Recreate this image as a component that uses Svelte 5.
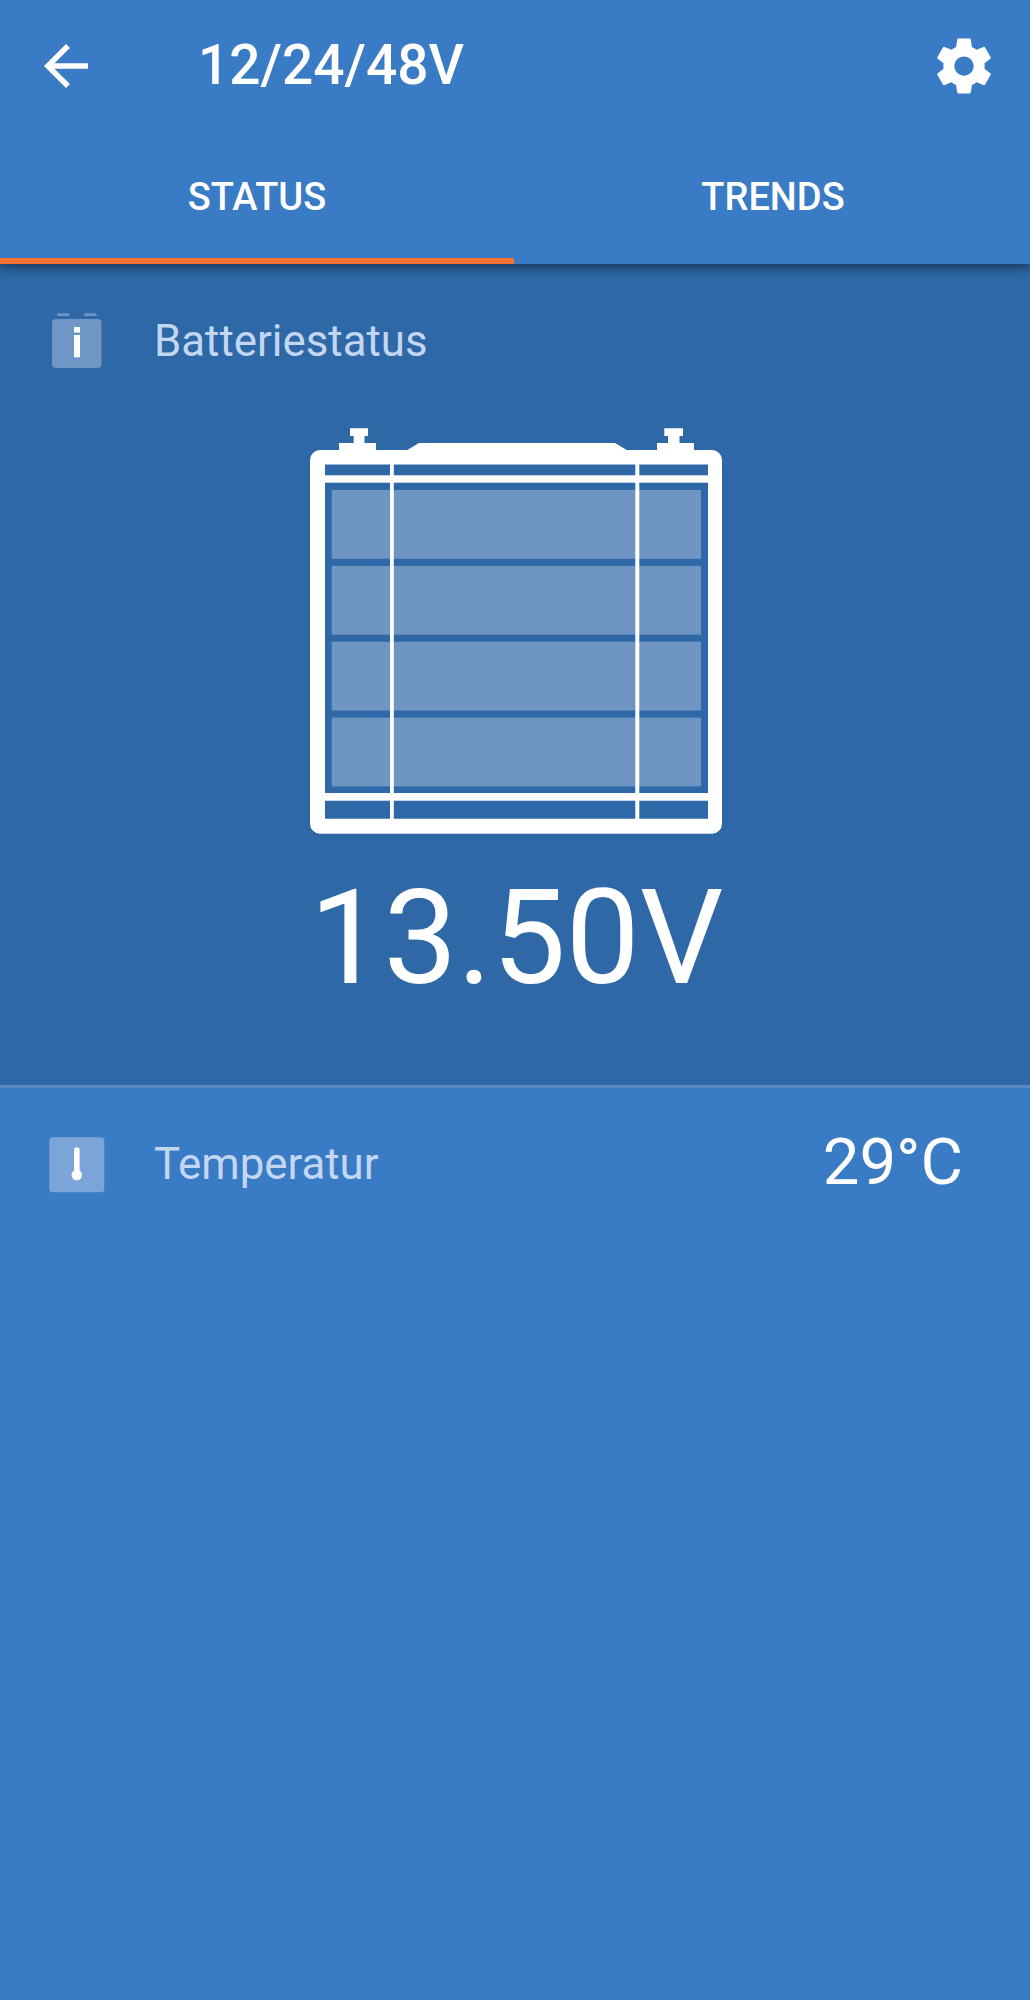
<script lang="ts">
	const tabs = ['STATUS', 'TRENDS'];
	let active = $state(0);

	const title = '12/24/48V';
	const voltage = '13.50V';
	const temperature = '29°C';

	// top edge of each charge bar inside the battery
	const cells = [62, 137.9, 213.7, 289.6];
</script>

<div class="app">
	<header class="appBar">
		<div class="toolbar">
			<button class="iconButton" aria-label="Zurück">
				<svg width="66" height="66" viewBox="0 0 24 24" fill="currentColor">
					<path d="M20 11H7.83l5.59-5.59L12 4l-8 8 8 8 1.41-1.41L7.83 13H20v-2z" />
				</svg>
			</button>
			<h1 class="title">{title}</h1>
			<button class="iconButton" aria-label="Einstellungen">
				<svg width="66" height="66" viewBox="0 0 24 24" fill="currentColor">
					<path
						d="M19.43 12.98c.04-.32.07-.64.07-.98s-.03-.66-.07-.98l2.11-1.65c.19-.15.24-.42.12-.64l-2-3.46c-.12-.22-.39-.3-.61-.22l-2.49 1c-.52-.4-1.08-.73-1.69-.98l-.38-2.65C14.46 2.18 14.25 2 14 2h-4c-.25 0-.46.18-.49.42l-.38 2.65c-.61.25-1.17.59-1.69.98l-2.49-1c-.23-.09-.49 0-.61.22l-2 3.46c-.13.22-.07.49.12.64l2.11 1.65c-.04.32-.07.65-.07.98s.03.66.07.98l-2.11 1.65c-.19.15-.24.42-.12.64l2 3.46c.12.22.39.3.61.22l2.49-1c.52.4 1.08.73 1.69.98l.38 2.65c.03.24.24.42.49.42h4c.25 0 .46-.18.49-.42l.38-2.65c.61-.25 1.17-.59 1.69-.98l2.49 1c.23.09.49 0 .61-.22l2-3.46c.12-.22.07-.49-.12-.64l-2.11-1.65zM12 15.5c-1.93 0-3.5-1.57-3.5-3.5s1.57-3.5 3.5-3.5 3.5 1.57 3.5 3.5-1.57 3.5-3.5 3.5z"
					/>
				</svg>
			</button>
		</div>
		<div class="tabs" role="tablist">
			{#each tabs as tab, i}
				<button
					class="tab"
					class:active={active === i}
					role="tab"
					aria-selected={active === i}
					onclick={() => (active = i)}
				>
					{tab}
				</button>
			{/each}
		</div>
	</header>

	<section class="battery">
		<div class="row">
			<svg class="rowIcon" width="56" height="56" viewBox="0 0 56 56">
				<g fill="#7096c5">
					<rect x="8" y="0.3" width="12" height="2.7" />
					<rect x="35.5" y="0.3" width="12" height="2.7" />
					<rect x="3" y="6" width="49.5" height="49" rx="4" />
				</g>
				<g fill="#fff">
					<rect x="25" y="14" width="6" height="5.5" />
					<rect x="25" y="22" width="6" height="22.3" />
				</g>
			</svg>
			<span class="label">Batteriestatus</span>
		</div>

		<svg class="batteryFigure" width="412" height="406" viewBox="0 0 412 406">
			<g fill="#6f95c2">
				{#each cells as y}
					<rect x="21.7" {y} width="369.3" height="68.8" />
				{/each}
			</g>
			<g fill="#fff">
				<path
					fill-rule="evenodd"
					d="M10 22H402a10 10 0 0 1 10 10V395.7a10 10 0 0 1-10 10H10a10 10 0 0 1-10-10V32a10 10 0 0 1 10-10zM15 36.5V390.7H398V36.5z"
				/>
				<path d="M40 0.3H58V8H54.5V15H66V23H29V15H43.7V8H40z" />
				<path d="M354.3 0.3H373V8H369.5V15H384V23H347V15H358V8H354.3z" />
				<path d="M96.5 22.5L109 15H305L317.5 22.5z" />
				<rect x="14" y="47.3" width="385" height="7.4" />
				<rect x="14" y="365" width="385" height="7.7" />
				<rect x="80" y="36" width="3.8" height="355" />
				<rect x="325.3" y="36" width="4" height="355" />
			</g>
		</svg>

		<div class="voltage">{voltage}</div>
	</section>

	<section class="row temperature">
		<svg class="rowIcon" width="56" height="56" viewBox="0 0 56 56">
			<rect x="0.3" y="0.3" width="55" height="55" rx="3.5" fill="#7ba4d8" />
			<path d="M27.8 13V38" stroke="#fff" stroke-width="5.6" stroke-linecap="round" />
			<circle cx="27.8" cy="38" r="5.3" fill="#fff" />
		</svg>
		<span class="label">Temperatur</span>
		<span class="value">{temperature}</span>
	</section>
</div>

<style>
	:global(body) {
		margin: 0;
		background: #397bc5;
	}

	.app {
		display: flex;
		flex-direction: column;
		min-height: 2000px;
		background: #397bc5;
		color: #fff;
		font-family: Roboto, 'Liberation Sans', sans-serif;
	}

	button {
		margin: 0;
		border: 0;
		padding: 0;
		background: none;
		color: inherit;
		font: inherit;
		cursor: pointer;
	}

	.appBar {
		position: relative;
		z-index: 1;
		height: 264px;
		background: #397bc5;
		box-shadow:
			0 4px 12px rgb(0 0 0 / 0.3),
			0 0 9px 2px rgb(0 0 0 / 0.24);
	}

	.toolbar {
		display: flex;
		align-items: center;
		box-sizing: border-box;
		height: 132px;
		padding: 0 33px;
	}

	.iconButton {
		display: flex;
	}

	.title {
		flex: 1;
		margin: 0 0 2px 99px;
		font-size: 55px;
		font-weight: 500;
		line-height: 64px;
	}

	.tabs {
		display: flex;
		height: 132px;
	}

	.tab {
		flex: 1;
		box-sizing: border-box;
		border-bottom: 6px solid transparent;
		padding: 3px 0 0 2px;
		font-size: 38px;
		font-weight: 500;
		line-height: 44px;
	}

	.tab:first-child {
		flex: 0 0 514px;
		padding-left: 0;
	}

	.tab.active {
		border-bottom-color: #f8702e;
	}

	.battery {
		display: flex;
		flex-direction: column;
		align-items: center;
		box-sizing: border-box;
		height: 824px;
		border-bottom: 3px solid #5a87bd;
		padding-top: 49px;
		background: #2e68a7;
	}

	.row {
		display: flex;
		align-items: center;
		align-self: stretch;
		height: 56px;
		padding: 0 67px 0 49px;
	}

	.rowIcon {
		flex: none;
	}

	.label {
		margin-left: 49px;
		color: #c3d7f3;
		font-size: 43.8px;
		line-height: 52px;
	}

	.batteryFigure {
		margin: 59px 0 0 2.6px;
	}

	.voltage {
		margin: 27px 0 0 3px;
		font-size: 131.5px;
		line-height: 154px;
	}

	.temperature {
		margin-top: 49px;
	}

	.temperature .label {
		margin-bottom: 3px;
	}

	.value {
		margin: 0 0 6px auto;
		font-size: 65.3px;
		line-height: 76px;
	}
</style>
